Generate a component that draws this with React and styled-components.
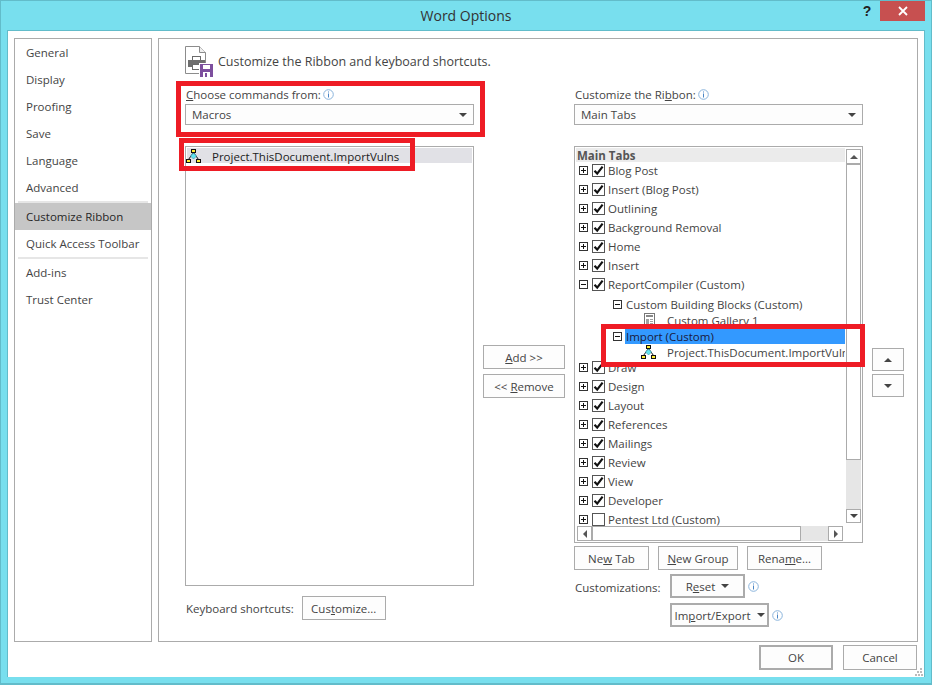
import React from 'react';
import styled, { createGlobalStyle } from 'styled-components';

const GlobalStyle = createGlobalStyle`
  html, body {
    margin: 0;
    padding: 0;
    background: #78dfee;
  }
  body {
    font-family: 'Open Sans', 'Noto Sans', 'Liberation Sans', sans-serif;
    font-size: 11.5px;
    color: #444;
  }
  * {
    box-sizing: border-box;
  }
`;

const Frame = styled.div`
  position: relative;
  width: 932px;
  height: 685px;
  background: #78dfee;
  border: 1px solid #62bcca;
  border-bottom-width: 2px;
  display: flex;
  flex-direction: column;
  overflow: hidden;
`;

const TitleBar = styled.div`
  height: 29px;
  flex: none;
  position: relative;
  display: flex;
  justify-content: center;
  padding-top: 5px;
  font-size: 14px;
  line-height: 20px;
  color: #333;
`;

const WindowButtons = styled.div`
  position: absolute;
  top: 0;
  right: 6px;
  display: flex;
  align-items: flex-start;
`;

const HelpGlyph = styled.span`
  width: 26px;
  text-align: center;
  font-family: 'Liberation Sans', sans-serif;
  font-weight: bold;
  font-size: 14px;
  line-height: 21px;
  color: #222;
`;

const CloseButton = styled.div`
  width: 45px;
  height: 20px;
  background: #c75050;
  display: flex;
  align-items: center;
  justify-content: center;
`;

const Body = styled.div`
  width: 918px;
  height: 647px;
  margin-left: 6px;
  background: #fff;
  border: 1px solid #62bcca;
  border-width: 1px 1px 0 1px;
  padding: 7px 6px 0 6px;
  flex: none;
  display: flex;
  flex-direction: column;
  position: relative;
`;

const Panels = styled.div`
  display: flex;
  gap: 6px;
  height: 604px;
  flex: none;
`;

const Nav = styled.nav`
  width: 138px;
  border: 1px solid #ababab;
  display: flex;
  flex-direction: column;
  flex: none;
`;

const NavItem = styled.div`
  height: 27px;
  line-height: 27px;
  padding-left: 11px;
  white-space: nowrap;
  background: ${p => (p.$selected ? '#c6c6c6' : 'transparent')};
  color: ${p => (p.$selected ? '#262626' : '#444')};
`;

const NavSep = styled.div`
  height: 2px;
  margin: 0 3px;
  background: #e6e6e6;
  flex: none;
`;

const Main = styled.main`
  width: 760px;
  flex: none;
  border: 1px solid #ababab;
  padding: 7px 0 0 26px;
  display: flex;
  flex-direction: column;
`;

const Heading = styled.div`
  display: flex;
  align-items: center;
  gap: 5px;
  height: 31px;
  flex: none;
  font-size: 12.5px;
`;

const Columns = styled.div`
  display: grid;
  grid-template-columns: 289px 82px 289px 32px;
  column-gap: 9px;
  height: 553px;
  margin-top: 7px;
`;

const Column = styled.div`
  display: flex;
  flex-direction: column;
  min-width: 0;
`;

const MiddleColumn = styled.div`
  display: flex;
  flex-direction: column;
  gap: 5px;
  padding-top: 261px;
`;

const MoveColumn = styled.div`
  display: flex;
  flex-direction: column;
  gap: 3px;
  padding-top: 264px;
`;

const FieldLabel = styled.div`
  height: 20px;
  line-height: 17px;
  display: flex;
  align-items: center;
  gap: 2px;
  margin-left: 1px;
  u {
    text-decoration-thickness: 1px;
  }
`;

const Select = styled.div`
  height: 21px;
  border: 1px solid #ababab;
  background: #fdfdfd;
  display: flex;
  align-items: center;
  justify-content: space-between;
  padding: 0 6px;
  flex: none;
`;

const Caret = styled.span`
  width: 0;
  height: 0;
  border-left: ${p => p.$size || 4}px solid transparent;
  border-right: ${p => p.$size || 4}px solid transparent;
  border-top: ${p => p.$size || 4}px solid #444;
  flex: none;
  margin-left: ${p => p.$gap || 0}px;
`;

const ListBox = styled.div`
  margin-top: 21px;
  height: 440px;
  flex: none;
  border: 1px solid #ababab;
  padding: 1px;
`;

const ListRow = styled.div`
  height: 15px;
  background: #e1e1e6;
  display: flex;
  align-items: center;
  color: #222;
  gap: 10px;
  white-space: nowrap;
  padding-top: 1px;
  svg {
    margin-left: -1px;
  }
`;

const ShortcutsRow = styled.div`
  display: flex;
  align-items: center;
  margin-top: 10px;
  gap: 8px;
  padding-left: 1px;
`;

const Button = styled.div`
  width: ${p => p.$w}px;
  height: ${p => p.$h || 24}px;
  border: ${p => (p.$strong ? 2 : 1)}px solid #ababab;
  background: #fdfdfd;
  display: flex;
  align-items: center;
  justify-content: center;
  color: #444;
  white-space: nowrap;
  flex: none;
  u {
    text-decoration-thickness: 1px;
  }
`;

const Tree = styled.div`
  margin-top: 21px;
  height: 397px;
  flex: none;
  border: 1px solid #ababab;
  padding: 1px;
  display: grid;
  grid-template-columns: 269px 15px;
  grid-template-rows: 1fr 15px;
  column-gap: 1px;
`;

const TreeContent = styled.div`
  overflow: hidden;
  min-width: 0;
`;

const TreeHeader = styled.div`
  height: 14px;
  background: #ebebeb;
  font-weight: 700;
  color: #555;
  line-height: 16px;
  padding-left: 1px;
  margin-bottom: -1px;
`;

const TreeRow = styled.div`
  height: ${p => p.$h || 19}px;
  margin-top: ${p => p.$mt || 0}px;
  display: flex;
  align-items: center;
  padding-left: ${p => p.$indent || 3}px;
  white-space: nowrap;
  flex: none;
`;

const Expander = styled.span`
  width: 9px;
  height: 9px;
  border: 1px solid #333;
  background: #fff;
  position: relative;
  flex: none;
  margin-right: ${p => p.$gap || 4}px;
  &::before {
    content: '';
    position: absolute;
    left: 1px;
    right: 1px;
    top: 3px;
    height: 1px;
    background: #111;
  }
  &::after {
    content: '';
    display: ${p => (p.$open ? 'none' : 'block')};
    position: absolute;
    top: 1px;
    bottom: 1px;
    left: 3px;
    width: 1px;
    background: #111;
  }
`;

const Check = styled.span`
  width: 13px;
  height: 13px;
  border: 1px solid #555;
  background: #fff;
  flex: none;
  margin-right: 2px;
  display: flex;
  align-items: center;
  justify-content: center;
`;

const TreeLabel = styled.span`
  background: ${p => (p.$selected ? '#3399ff' : 'transparent')};
  color: ${p => (p.$selected ? '#1a1a3c' : '#444')};
  flex: ${p => (p.$selected ? 1 : 'none')};
  line-height: 15px;
  padding-left: 1px;
`;

const IconSlot = styled.span`
  width: 16px;
  height: 16px;
  flex: none;
  margin-right: 9px;
  display: flex;
  align-items: center;
  justify-content: center;
`;

const VScroll = styled.div`
  grid-column: 2;
  grid-row: 1;
  height: 374px;
  margin-top: 1px;
  display: flex;
  flex-direction: column;
  background: #e6e6e6;
`;

const HScroll = styled.div`
  grid-column: 1;
  grid-row: 2;
  display: flex;
  height: 15px;
  background: #e6e6e6;
  width: 266px;
  margin-left: 1px;
`;

const ScrollButton = styled.div`
  width: 15px;
  height: ${p => p.$h || 15}px;
  border: 1px solid #ababab;
  background: #fff;
  display: flex;
  align-items: center;
  justify-content: center;
  flex: none;
`;

const Thumb = styled.div`
  border: 1px solid #ababab;
  background: #fff;
  flex: none;
  ${p => (p.$vertical ? `height: ${p.$size}px; width: 15px;` : `width: ${p.$size}px; height: 15px;`)}
`;

const ScrollGrow = styled.div`
  flex: 1;
`;

const SideTri = styled.span`
  width: 0;
  height: 0;
  border-top: 4px solid transparent;
  border-bottom: 4px solid transparent;
  ${p => (p.$left ? 'border-right: 4px solid #555;' : 'border-left: 4px solid #555;')}
`;

const UpTri = styled.span`
  width: 0;
  height: 0;
  border-left: 4px solid transparent;
  border-right: 4px solid transparent;
  border-bottom: 4px solid ${p => p.$color || '#555'};
`;

const ButtonRow = styled.div`
  display: flex;
  gap: 9px;
  margin-top: 3px;
`;

const CustomizationsRow = styled.div`
  display: flex;
  margin-top: 4px;
  padding-left: 1px;
`;

const CustomizationsLabel = styled.div`
  width: 95px;
  line-height: 17px;
  padding-top: 5px;
`;

const ResetStack = styled.div`
  display: flex;
  flex-direction: column;
  gap: 5px;
`;

const ResetLine = styled.div`
  display: flex;
  align-items: center;
  gap: 3px;
`;

const Footer = styled.div`
  display: flex;
  justify-content: flex-end;
  gap: 10px;
  padding: 3px 1px 0 0;
`;

const Highlight = styled.div`
  position: absolute;
  left: ${p => p.$x}px;
  top: ${p => p.$y}px;
  width: ${p => p.$w}px;
  height: ${p => p.$h}px;
  border: 5px solid #ee1c25;
  pointer-events: none;
`;

const Grip = styled.svg`
  position: absolute;
  right: 1px;
  bottom: 1px;
`;

const Info = () => (
  <svg width="11" height="11" viewBox="0 0 11 11">
    <circle cx="5.5" cy="5.5" r="4.8" fill="#fff" stroke="#8ab4dc" />
    <rect x="5" y="2.5" width="1" height="1" fill="#4a86c5" />
    <rect x="5" y="4.5" width="1" height="4" fill="#4a86c5" />
  </svg>
);

const Tick = () => (
  <svg width="11" height="11" viewBox="0 0 11 11">
    <path d="M1.5 5.8 L4.2 8.6 L9.6 1.6" fill="none" stroke="#111" strokeWidth="2.2" />
  </svg>
);

const MacroIcon = () => (
  <svg width="16" height="14" viewBox="0 0 16 14" style={{ flex: 'none' }}>
    <path d="M7.5 3.5 L2.5 10.5 M7.5 3.5 L12.5 10.5 M7.5 3 V5" stroke="#111" fill="none" />
    <path d="M7.5 4 L10.5 7 L7.5 10 L4.5 7 Z" fill="#5fe4f0" stroke="#3f9fb0" strokeWidth="0.7" />
    <rect x="5.5" y="0.5" width="4" height="3" fill="#ffee33" stroke="#111" />
    <rect x="0.5" y="10.5" width="4" height="3" fill="#ffee33" stroke="#111" />
    <rect x="10.5" y="10.5" width="4" height="3" fill="#ffee33" stroke="#111" />
  </svg>
);

const GalleryIcon = () => (
  <svg width="11" height="14" viewBox="0 0 11 14">
    <rect x="0.5" y="0.5" width="10" height="13" fill="#fff" stroke="#777" />
    <rect x="2" y="2" width="7" height="2" fill="#888" />
    <rect x="2" y="6" width="3" height="5" fill="#a0a0a0" />
    <rect x="6" y="6" width="3" height="1" fill="#a0a0a0" />
    <rect x="6" y="8" width="3" height="1" fill="#a0a0a0" />
    <rect x="6" y="10" width="3" height="1" fill="#a0a0a0" />
  </svg>
);

const PrinterFileIcon = () => (
  <svg width="28" height="31" viewBox="0 0 28 31">
    <path d="M0.5 0.5 H14.5 L20.5 6.5 V27.5 H0.5 Z" fill="#fff" stroke="#8c8c8c" />
    <path d="M14.5 0.5 V6.5 H20.5" fill="#efefef" stroke="#8c8c8c" />
    <rect x="7.5" y="10.5" width="8" height="5" fill="#fff" stroke="#6a6a6a" />
    <rect x="3" y="14" width="17" height="7" fill="#6e6e6e" />
    <rect x="7.5" y="18.5" width="8" height="5" fill="#fff" stroke="#6a6a6a" />
    <rect x="14" y="17" width="14" height="14" fill="#fff" />
    <rect x="15" y="18" width="13" height="13" fill="#7d4f9e" />
    <rect x="18" y="19" width="7" height="4" fill="#fff" />
    <rect x="18" y="26" width="7" height="5" fill="#fff" />
    <rect x="20" y="27" width="2" height="4" fill="#7d4f9e" />
  </svg>
);

const navTop = ['General', 'Display', 'Proofing', 'Save', 'Language', 'Advanced'];
const navBottom = ['Add-ins', 'Trust Center'];

const topTabs = ['Blog Post', 'Insert (Blog Post)', 'Outlining', 'Background Removal', 'Home', 'Insert'];
const lowerTabs = ['Design', 'Layout', 'References', 'Mailings', 'Review', 'View', 'Developer'];

const TabRow = ({ label, open, checked = true, mt }) => (
  <TreeRow $mt={mt}>
    <Expander $open={open} />
    <Check>{checked && <Tick />}</Check>
    <TreeLabel>{label}</TreeLabel>
  </TreeRow>
);

export default function App() {
  return (
    <>
      <GlobalStyle />
      <Frame>
        <TitleBar>
          Word Options
          <WindowButtons>
            <HelpGlyph>?</HelpGlyph>
            <CloseButton>
              <svg width="10" height="10" viewBox="0 0 10 10">
                <path d="M1 1 L9 9 M9 1 L1 9" stroke="#fff" strokeWidth="1.8" />
              </svg>
            </CloseButton>
          </WindowButtons>
        </TitleBar>
        <Body>
          <Panels>
            <Nav>
              {navTop.map(item => (
                <NavItem key={item}>{item}</NavItem>
              ))}
              <NavSep />
              <NavItem $selected>Customize Ribbon</NavItem>
              <NavItem>Quick Access Toolbar</NavItem>
              <NavSep />
              {navBottom.map(item => (
                <NavItem key={item}>{item}</NavItem>
              ))}
            </Nav>
            <Main>
              <Heading>
                <PrinterFileIcon />
                Customize the Ribbon and keyboard shortcuts.
              </Heading>
              <Columns>
                <Column>
                  <FieldLabel>
                    <span><u>C</u>hoose commands from:</span>
                    <Info />
                  </FieldLabel>
                  <Select>
                    Macros
                    <Caret />
                  </Select>
                  <ListBox>
                    <ListRow>
                      <MacroIcon />
                      Project.ThisDocument.ImportVulns
                    </ListRow>
                  </ListBox>
                  <ShortcutsRow>
                    Keyboard shortcuts:
                    <Button $w={84}>
                      <span>Cus<u>t</u>omize...</span>
                    </Button>
                  </ShortcutsRow>
                </Column>
                <MiddleColumn>
                  <Button $w={82}>
                    <span><u>A</u>dd &gt;&gt;</span>
                  </Button>
                  <Button $w={82}>
                    <span>&lt;&lt; <u>R</u>emove</span>
                  </Button>
                </MiddleColumn>
                <Column>
                  <FieldLabel>
                    <span>Customize the Ri<u>b</u>bon:</span>
                    <Info />
                  </FieldLabel>
                  <Select>
                    Main Tabs
                    <Caret />
                  </Select>
                  <Tree>
                    <TreeContent>
                      <TreeHeader>Main Tabs</TreeHeader>
                      {topTabs.map(tab => (
                        <TabRow key={tab} label={tab} />
                      ))}
                      <TabRow label="ReportCompiler (Custom)" open />
                      <TreeRow $indent={37} $h={16} $mt={2}>
                        <Expander $open $gap={3} />
                        <TreeLabel>Custom Building Blocks (Custom)</TreeLabel>
                      </TreeRow>
                      <TreeRow $indent={65} $h={16}>
                        <IconSlot><GalleryIcon /></IconSlot>
                        <TreeLabel>Custom Gallery 1</TreeLabel>
                      </TreeRow>
                      <TreeRow $indent={37} $h={16}>
                        <Expander $open $gap={3} />
                        <TreeLabel $selected>Import (Custom)</TreeLabel>
                      </TreeRow>
                      <TreeRow $indent={65} $h={16}>
                        <IconSlot><MacroIcon /></IconSlot>
                        <TreeLabel>Project.ThisDocument.ImportVulns</TreeLabel>
                      </TreeRow>
                      <TabRow label="Draw" mt={-2} />
                      {lowerTabs.map(tab => (
                        <TabRow key={tab} label={tab} />
                      ))}
                      <TabRow label="Pentest Ltd (Custom)" checked={false} />
                    </TreeContent>
                    <VScroll>
                      <ScrollButton><UpTri /></ScrollButton>
                      <Thumb $vertical $size={296} />
                      <ScrollGrow />
                      <ScrollButton $h={14}><Caret /></ScrollButton>
                    </VScroll>
                    <HScroll>
                      <ScrollButton><SideTri $left /></ScrollButton>
                      <Thumb $size={209} />
                      <ScrollGrow />
                      <ScrollButton><SideTri /></ScrollButton>
                    </HScroll>
                  </Tree>
                  <ButtonRow>
                    <Button $w={75}>
                      <span>Ne<u>w</u> Tab</span>
                    </Button>
                    <Button $w={80}>
                      <span><u>N</u>ew Group</span>
                    </Button>
                    <Button $w={75}>
                      <span>Rena<u>m</u>e...</span>
                    </Button>
                  </ButtonRow>
                  <CustomizationsRow>
                    <CustomizationsLabel>Customizations:</CustomizationsLabel>
                    <ResetStack>
                      <ResetLine>
                        <Button $w={75} $strong>
                          <span>R<u>e</u>set</span>
                          <Caret $gap={6} />
                        </Button>
                        <Info />
                      </ResetLine>
                      <ResetLine>
                        <Button $w={99} $strong>
                          <span>Im<u>p</u>ort/Export</span>
                          <Caret $gap={6} />
                        </Button>
                        <Info />
                      </ResetLine>
                    </ResetStack>
                  </CustomizationsRow>
                </Column>
                <MoveColumn>
                  <Button $w={32} $h={23}><UpTri $color="#444" /></Button>
                  <Button $w={32} $h={23}><Caret /></Button>
                </MoveColumn>
              </Columns>
            </Main>
          </Panels>
          <Footer>
            <Button $w={74} $h={25} $strong>OK</Button>
            <Button $w={74} $h={25}>Cancel</Button>
          </Footer>
          <Grip width="8" height="8" viewBox="0 0 8 8">
            <rect x="5" y="0" width="2" height="2" fill="#bbb" />
            <rect x="2" y="3" width="2" height="2" fill="#bbb" />
            <rect x="5" y="3" width="2" height="2" fill="#bbb" />
            <rect x="0" y="6" width="2" height="2" fill="#bbb" />
            <rect x="3" y="6" width="2" height="2" fill="#bbb" />
            <rect x="6" y="6" width="2" height="2" fill="#bbb" />
          </Grip>
        </Body>
        <Highlight $x={175} $y={80} $w={309} $h={56} />
        <Highlight $x={178} $y={137} $w={236} $h={33} />
        <Highlight $x={600} $y={323} $w={264} $h={43} />
      </Frame>
    </>
  );
}
